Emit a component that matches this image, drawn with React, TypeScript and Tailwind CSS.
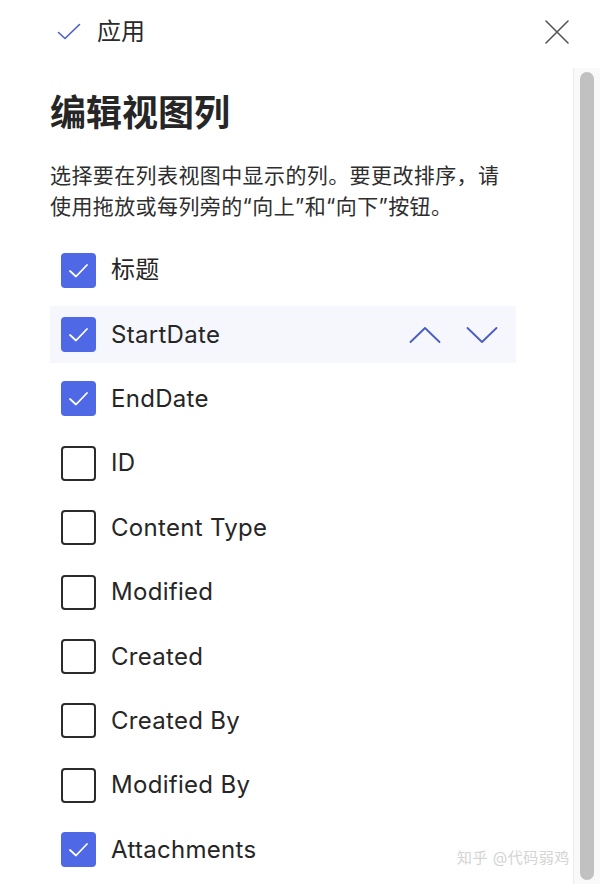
import React from 'react';

type Column = {
  label: string;
  checked: boolean;
  active?: boolean;
};

const columns: Column[] = [
  { label: '标题', checked: true },
  { label: 'StartDate', checked: true, active: true },
  { label: 'EndDate', checked: true },
  { label: 'ID', checked: false },
  { label: 'Content Type', checked: false },
  { label: 'Modified', checked: false },
  { label: 'Created', checked: false },
  { label: 'Created By', checked: false },
  { label: 'Modified By', checked: false },
  { label: 'Attachments', checked: true },
];

const font = { fontFamily: 'Inter, "Noto Sans CJK SC", sans-serif' };

const Checkbox = ({ checked }: { checked: boolean }) =>
  checked ? (
    <div className="w-[35px] h-[35px] rounded-[4px] bg-[#4e68e6] flex items-center justify-center shrink-0">
      <svg width="35" height="35" viewBox="0 0 35 35" fill="none">
        <path d="M9 18 L15 23.5 L26 12" stroke="white" strokeWidth="1.8" strokeLinecap="round" strokeLinejoin="round" />
      </svg>
    </div>
  ) : (
    <div className="w-[35px] h-[35px] rounded-[4px] border-2 border-[#2b2b2b] bg-white shrink-0" />
  );

export default function App() {
  return (
    <div className="relative w-[600px] h-[884px] overflow-hidden bg-white text-[#242424]" style={font}>
      {/* top bar */}
      <div className="h-[68px] pb-[4px] flex items-center pl-[57px] pr-[31px]">
        <svg width="24" height="18" viewBox="0 0 24 18" fill="none">
          <path d="M1.5 9.5 L8 15.5 L22.5 1.5" stroke="#4a5fc8" strokeWidth="1.6" strokeLinecap="round" strokeLinejoin="round" />
        </svg>
        <span className="ml-[16px] text-[24px] leading-none text-[#2a2a2a]">应用</span>
        <div className="flex-1" />
        <svg width="24" height="24" viewBox="0 0 24 24" fill="none">
          <path d="M1 1 L23 23 M23 1 L1 23" stroke="#555" strokeWidth="1.6" strokeLinecap="round" />
        </svg>
      </div>

      <div className="flex h-[816px]">
        <div className="flex-1 pl-[50px] pr-[57px]">
          <h1 className="mt-[25px] text-[36px] leading-[40px] font-bold text-[#262626]">编辑视图列</h1>
          <p className="mt-[27px] text-[21px] leading-[31px] text-[#2e2e2e] tracking-[0.4px]">
            选择要在列表视图中显示的列。要更改排序，请使用拖放或每列旁的“向上”和“向下”按钮。
          </p>
          <div className="mt-[16px]">
            {columns.map((c) => (
              <div key={c.label} className="h-[64.4px] flex items-center">
                <div
                  className={`w-full h-[57px] flex items-center pl-[11px] pr-[18px] ${
                    c.active ? 'bg-[#f5f7fd]' : ''
                  }`}
                >
                  <Checkbox checked={c.checked} />
                  <span className="ml-[15px] text-[24px] leading-none text-[#262626] tracking-[0.3px]">{c.label}</span>
                  {c.active && (
                    <div className="ml-auto flex items-center gap-[25px]">
                      <svg width="32" height="18" viewBox="0 0 32 18" fill="none">
                        <path d="M1.5 16 L16 2 L30.5 16" stroke="#4b5bc4" strokeWidth="1.8" strokeLinecap="round" strokeLinejoin="round" />
                      </svg>
                      <svg width="32" height="18" viewBox="0 0 32 18" fill="none">
                        <path d="M1.5 2 L16 16 L30.5 2" stroke="#4b5bc4" strokeWidth="1.8" strokeLinecap="round" strokeLinejoin="round" />
                      </svg>
                    </div>
                  )}
                </div>
              </div>
            ))}
          </div>
        </div>

        {/* scrollbar */}
        <div className="w-[27px] border-l border-[#ececec] bg-[#f9f9f9] pt-[4px] pl-[6px] pr-[6px]">
          <div className="h-[808px] rounded-full bg-[#c1c1c1]" />
        </div>
      </div>

      <div className="absolute left-[457px] top-[847px] text-[15px] text-[#d4d4d4] tracking-[0.5px]">知乎 @代码弱鸡</div>
    </div>
  );
}
